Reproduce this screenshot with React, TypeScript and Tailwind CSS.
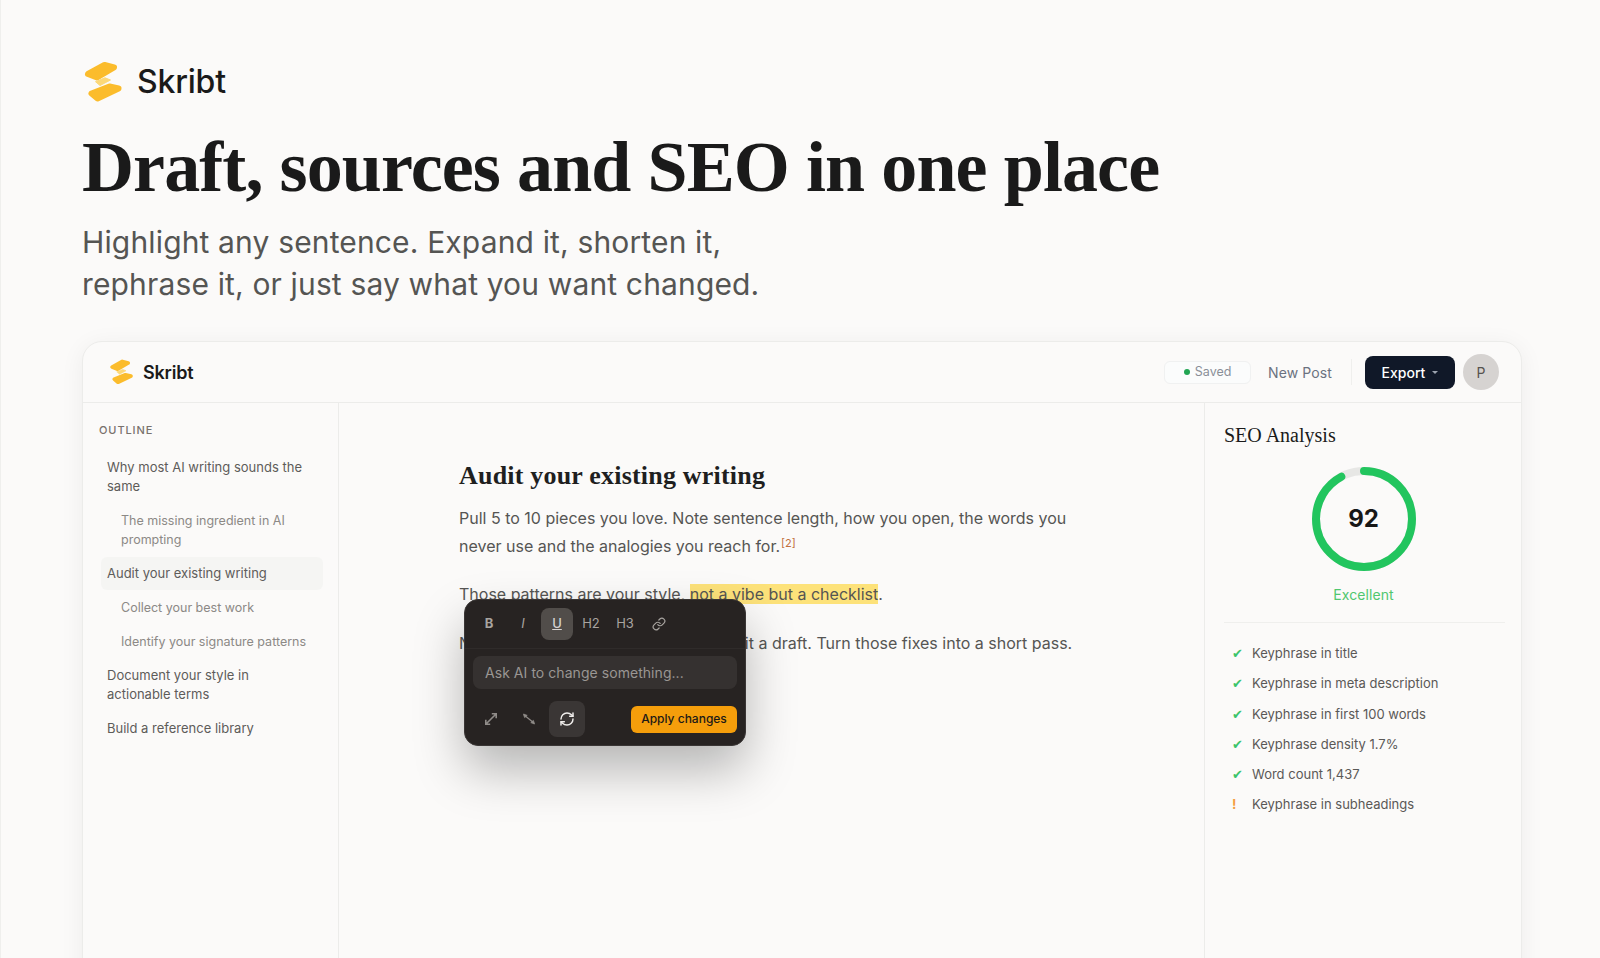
import { Link, RefreshCw } from "lucide-react";

function Logo({ className }: { className: string }) {
  return (
    <svg viewBox="0 0 42 44" className={className}>
      <g fill="#fbbc2c" stroke="#fbbc2c" strokeWidth="6" strokeLinejoin="round">
        <path d="M5 14 21.5 5 31 7.5 14 17.5Z" />
        <path d="M8.5 33.5 26.5 26.5 35.5 28.5 14.5 38.5Z" />
      </g>
      <path d="M12.5 21.7 22 17.8 27.5 20 17 25.5Z" fill="#fcd878" stroke="#fcd878" strokeWidth="1" strokeLinejoin="round" />
    </svg>
  );
}

function ShrinkIcon() {
  return (
    <svg viewBox="0 0 16 16" className="w-[16px] h-[16px]" fill="#8f8b88" stroke="#8f8b88" strokeWidth="1.3">
      <path d="M3 4 13 12" fill="none" />
      <path d="M2.5 3 6.2 4.4 3.6 6.6Z M13.5 13 9.8 11.6 12.4 9.4Z" strokeWidth="0.8" />
    </svg>
  );
}

function ExpandIcon() {
  return (
    <svg viewBox="0 0 16 16" className="w-[16px] h-[16px]" fill="none" stroke="#8f8b88" strokeWidth="1.6">
      <path d="M3 13 13 3M8.8 2.8h4.4v4.4M2.8 8.8v4.4h4.4" />
    </svg>
  );
}

const outline = [
  { text: "Why most AI writing sounds the same", sub: false },
  { text: "The missing ingredient in AI prompting", sub: true },
  { text: "Audit your existing writing", sub: false, active: true },
  { text: "Collect your best work", sub: true },
  { text: "Identify your signature patterns", sub: true },
  { text: "Document your style in actionable terms", sub: false },
  { text: "Build a reference library", sub: false },
];

const checks = [
  "Keyphrase in title",
  "Keyphrase in meta description",
  "Keyphrase in first 100 words",
  "Keyphrase density 1.7%",
  "Word count 1,437",
];

const serif = "font-['Liberation_Serif',serif]";

export default function App() {
  return (
    <div className="h-[958px] overflow-hidden bg-[#fbfaf9] pl-[81px] pr-[78px] pt-[60px] font-['Inter',sans-serif] border-l border-[#efefed]">
      <div className="flex items-center gap-[12px] h-[44px]">
        <Logo className="ml-[1px] w-[42px] h-[44px]" />
        <span className="text-[32px] font-medium text-[#1a1a1a] tracking-[-0.2px]">Skribt</span>
      </div>

      <h1 className={`${serif} mt-[21px] text-[72px] leading-[84px] font-bold text-[#1a1a1a] tracking-[-0.9px]`}>
        Draft, sources and SEO in one place
      </h1>
      <p className="mt-[12px] text-[30px] leading-[42px] text-[#555553] tracking-[0.15px]">
        Highlight any sentence. Expand it, shorten it,
        <br />
        rephrase it, or just say what you want changed.
      </p>

      <div className="mt-[36px] h-[700px] bg-[#fbfaf9] border border-[#ececea] rounded-t-[20px] shadow-[0_4px_24px_rgba(0,0,0,0.06)]">
        <header className="h-[61px] flex items-center justify-between border-b border-[#ececea] pl-[26px] pr-[22px]">
          <div className="flex items-center gap-[8px]">
            <Logo className="w-[26px] h-[28px]" />
            <span className="text-[18px] font-semibold text-[#1a1a1a] tracking-[-0.2px]">Skribt</span>
          </div>
          <div className="flex items-center">
            <div className="flex items-center justify-center gap-[5px] w-[87px] h-[23px] rounded-[6px] border border-[#f0f1f1] bg-[#fbfcfc] text-[12.5px] text-[#8a8f98]">
              <span className="w-[6px] h-[6px] rounded-full bg-[#22a553]" />
              Saved
            </div>
            <span className="ml-[17px] text-[14px] tracking-[0.1px] text-[#6b7280]">New Post</span>
            <span className="ml-[19px] w-px h-[26px] bg-[#efefed]" />
            <button className="ml-[13px] w-[90px] h-[33px] rounded-[8px] bg-[#101828] text-white text-[14px] font-medium flex items-center justify-center gap-[7px]">
              Export
              <span className="w-0 h-0 border-x-[3px] border-x-transparent border-t-[3px] border-t-[#9ca3af]" />
            </button>
            <div className="ml-[8px] w-[36px] h-[36px] rounded-full bg-[#d6d3d1] text-[#57534e] text-[14px] flex items-center justify-center">
              P
            </div>
          </div>
        </header>

        <div className="flex h-[640px]">
          <aside className="w-[256px] shrink-0 border-r border-[#ececea] pl-[16px] pr-[15px] pt-[19px]">
            <div className="text-[11px] font-medium tracking-[0.9px] text-[#78716c] leading-[16px]">OUTLINE</div>
            <div className="mt-[13px] ml-[2px] flex flex-col gap-[1px]">
              {outline.map((o) => (
                <div
                  key={o.text}
                  className={`rounded-[6px] py-[7px] leading-[19px] ${o.sub ? "pl-[20px] pr-[8px] text-[12.5px] text-[#8c8986]" : "pl-[6px] pr-[8px] text-[13px] text-[#5e5c5a]"} ${o.active ? "bg-[#f5f5f3] text-[#1c1917]" : ""}`}
                >
                  {o.text}
                </div>
              ))}
            </div>
          </aside>

          <main className="relative flex-1 pl-[120px] pt-[57px]">
            <h2 className={`${serif} text-[26px] leading-[32px] font-bold text-[#1f1f1f] tracking-[0.2px]`}>Audit your existing writing</h2>
            <div className="mt-[12px] w-[640px] text-[16px] leading-[28px] text-[#555553]">
              <p>
                Pull 5 to 10 pieces you love. Note sentence length, how you open, the words you
                <br />
                never use and the analogies you reach for.
                <sup className="text-[11px] text-[#c2703d] ml-[1px]">[2]</sup>
              </p>
              <p className="mt-[20px]">
                Those patterns are your style, <span className="bg-[#fde27a]">not a vibe but a checklist</span>.
              </p>
              <p className="mt-[21px]">
                Now use a checklist each time you edit a draft. Turn those fixes into a short pass.
              </p>
            </div>

            <div className="absolute left-[125px] top-[196px] w-[282px] h-[147px] rounded-[14px] bg-[#272322] border border-[#3a3635] shadow-[0_24px_50px_rgba(0,0,0,0.28)]">
              <div className="h-[49px] flex items-center pl-[8px] text-[13px] text-[#a8a4a0] border-b border-[#2f2b2a]">
                <span className="w-[32px] h-[32px] flex items-center justify-center font-bold">B</span>
                <span className="ml-[2px] w-[32px] h-[32px] flex items-center justify-center italic">I</span>
                <span className="ml-[2px] w-[32px] h-[32px] flex items-center justify-center rounded-[8px] bg-[#514d4a] text-[#d6d3d1] font-medium underline">U</span>
                <span className="ml-[2px] w-[32px] h-[32px] flex items-center justify-center">H2</span>
                <span className="ml-[2px] w-[32px] h-[32px] flex items-center justify-center">H3</span>
                <span className="ml-[2px] w-[32px] h-[32px] flex items-center justify-center">
                  <Link size={14} />
                </span>
              </div>
              <div className="mt-[7px] mx-[8px] h-[33px] rounded-[8px] bg-[#353130] flex items-center pl-[12px] text-[14px] text-[#9a9693] tracking-[0.05px]">
                Ask AI to change something...
              </div>
              <div className="mt-[12px] pl-[8px] pr-[8px] flex items-center">
                <span className="w-[36px] h-[36px] flex items-center justify-center"><ExpandIcon /></span>
                <span className="ml-[2px] w-[36px] h-[36px] flex items-center justify-center"><ShrinkIcon /></span>
                <span className="ml-[2px] w-[36px] h-[36px] flex items-center justify-center rounded-[8px] bg-[#3a3635] text-[#f0eeec]"><RefreshCw size={16} strokeWidth={2.2} /></span>
                <button className="ml-auto w-[106px] h-[27px] rounded-[6px] bg-[#f59e0b] text-[#1c1917] text-[12px] font-medium">Apply changes</button>
              </div>
            </div>
          </main>

          <aside className="w-[317px] shrink-0 border-l border-[#ececea] pl-[19px] pr-[16px] pt-[19px]">
            <h3 className={`${serif} text-[20px] leading-[26px] text-[#1a1a1a]`}>SEO Analysis</h3>
            <div className="mt-[19px] mr-[2px] flex justify-center">
              <div className="relative w-[104px] h-[104px] flex items-center justify-center">
                <svg viewBox="0 0 104 104" className="absolute inset-0 w-[104px] h-[104px]">
                  <circle cx="52" cy="52" r="48" fill="none" stroke="#e7e7e5" strokeWidth="8" />
                  <circle cx="52" cy="52" r="48" fill="none" stroke="#22c55e" strokeWidth="8" strokeLinecap="round" strokeDasharray="277.5 301.6" transform="rotate(-90 52 52)" />
                </svg>
                <span className="text-[24px] font-bold text-[#171717]">92</span>
              </div>
            </div>
            <div className="mt-[14px] mr-[2px] text-center text-[14px] leading-[20px] tracking-[0.1px] text-[#4fc76f]">Excellent</div>
            <div className="mt-[17px] h-px bg-[#efefed]" />
            <ul className="mt-[21px] flex flex-col gap-[10.2px]">
              {checks.map((c) => (
                <li key={c} className="flex items-center h-[20px] text-[13px] text-[#5a5856]">
                  <span className="ml-[8px] w-[13px] font-['DejaVu_Sans',sans-serif] text-[13px] text-[#3cc46a]">✔</span>
                  <span className="ml-[7px]">{c}</span>
                </li>
              ))}
              <li className="flex items-center h-[20px] text-[13px] text-[#5a5856]">
                <span className="ml-[8px] w-[13px] font-bold text-[#f59e42]">!</span>
                <span className="ml-[7px]">Keyphrase in subheadings</span>
              </li>
            </ul>
          </aside>
        </div>
      </div>
    </div>
  );
}
